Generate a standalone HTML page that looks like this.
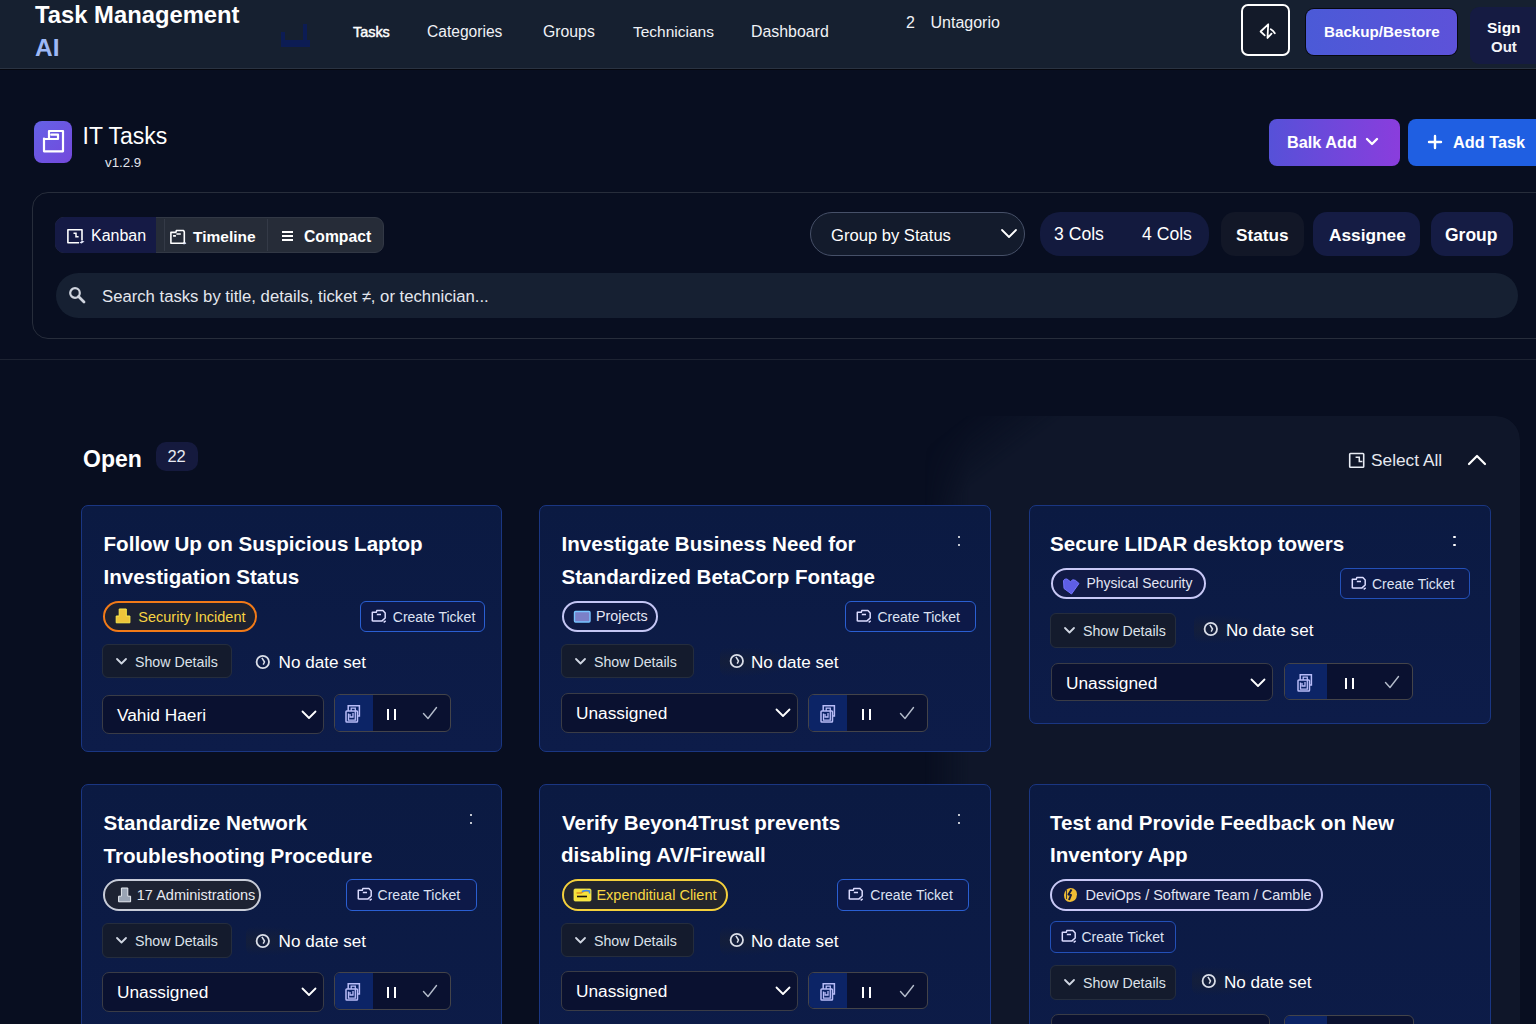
<!DOCTYPE html>
<html><head><meta charset="utf-8"><title>IT Tasks</title>
<style>
html,body{margin:0;padding:0;}
body{width:1536px;height:1024px;overflow:hidden;position:relative;background:#080e20;font-family:"Liberation Sans",sans-serif;}
.t{position:absolute;white-space:nowrap;}
.r{position:absolute;box-sizing:border-box;}
</style></head><body>

<div class="r" style="left:0px;top:0px;width:1536px;height:68px;background:#162030;"></div>
<div class="r" style="left:0px;top:68px;width:1536px;height:1px;background:#2a3342;"></div>
<div class="r" style="left:0px;top:69px;width:1536px;height:1px;background:#05070f;"></div>
<div class="t" style="left:35px;top:-0.12px;font-size:23.8px;line-height:29.75px;font-weight:700;color:#ffffff;">Task Management</div>
<div class="t" style="left:35px;top:33.2px;font-size:24.5px;line-height:30.62px;font-weight:700;color:#9db8f6;">AI</div>
<div class="r" style="left:281px;top:32px;width:4px;height:15px;background:#0c1c54;"></div>
<div class="r" style="left:303px;top:24px;width:4px;height:23px;background:#0c1c54;"></div>
<div class="r" style="left:281px;top:40px;width:29px;height:7px;background:#0c1c54;"></div>
<div class="t" style="left:353px;top:23.01px;font-size:14.4px;line-height:18.0px;font-weight:400;color:#ffffff;-webkit-text-stroke:0.45px #fff;">Tasks</div>
<div class="t" style="left:427px;top:21.84px;font-size:15.6px;line-height:19.5px;font-weight:400;color:#f0f2f6;">Categories</div>
<div class="t" style="left:543px;top:21.65px;font-size:15.8px;line-height:19.75px;font-weight:400;color:#f0f2f6;">Groups</div>
<div class="t" style="left:633px;top:21.94px;font-size:15.5px;line-height:19.38px;font-weight:400;color:#f0f2f6;">Technicians</div>
<div class="t" style="left:751px;top:21.55px;font-size:15.9px;line-height:19.88px;font-weight:400;color:#f0f2f6;">Dashboard</div>
<div class="t" style="left:906px;top:13.46px;font-size:16px;line-height:20.0px;font-weight:400;color:#f0f2f6;">2</div>
<div class="t" style="left:930.5px;top:13.46px;font-size:16px;line-height:20.0px;font-weight:400;color:#f0f2f6;">Untagorio</div>
<div class="r" style="left:1241px;top:4px;width:49px;height:52px;border:2px solid #ffffff;border-radius:7px;background:#131a29;"></div>
<svg class="r" style="left:1258px;top:22px;" width="20" height="20" viewBox="0 0 20 20" fill="none"><path d="M6.7 13.3 L2.6 9.5 L10.2 2.3 L9.5 16 L13.5 11.7 M12.8 7.2 Q15.2 8.5 16.8 11.2" stroke="#fff" stroke-width="1.8" stroke-linecap="round" stroke-linejoin="round"/></svg>
<div class="r" style="left:1305px;top:8px;width:153px;height:48px;border-radius:9px;background:#06080f;"></div>
<div class="r" style="left:1306px;top:9px;width:151px;height:46px;border-radius:8px;background:linear-gradient(90deg,#4b5ad7,#5d52d9);"></div>
<div class="t" style="left:1324px;top:22.23px;font-size:15.2px;line-height:19.0px;font-weight:700;color:#ffffff;">Backup/Bestore</div>
<div class="r" style="left:1470px;top:7px;width:76px;height:57px;border-radius:9px;background:#151b42;"></div>
<div class="t" style="left:1487px;top:17.94px;font-size:15.5px;line-height:19.38px;font-weight:700;color:#ffffff;">Sign</div>
<div class="t" style="left:1491px;top:38.43px;font-size:15px;line-height:18.75px;font-weight:700;color:#f4f4f8;">Out</div>
<div class="r" style="left:34px;top:121px;width:38px;height:42px;border-radius:8px;background:linear-gradient(135deg,#6462e6,#7448dc);"></div>
<svg class="r" style="left:32px;top:119px;" width="42" height="46" viewBox="0 0 42 46" fill="none"><path d="M12 19.5 V32.3 H31 V12 H17 V20 M12 20 H26 V15.7 H19.3" stroke="#fff" stroke-width="2.2" stroke-linejoin="round" stroke-linecap="round"/></svg>
<div class="t" style="left:82.5px;top:121.66px;font-size:23px;line-height:28.75px;font-weight:400;color:#ffffff;">IT Tasks</div>
<div class="t" style="left:105px;top:155.08px;font-size:13.3px;line-height:16.62px;font-weight:400;color:#e2e5ec;">v1.2.9</div>
<div class="r" style="left:1269px;top:119px;width:131px;height:47px;border-radius:8px;background:linear-gradient(90deg,#5651d8,#8a3ddd);"></div>
<div class="t" style="left:1287px;top:132.16px;font-size:16.3px;line-height:20.38px;font-weight:700;color:#ffffff;">Balk Add</div>
<svg class="r" style="left:1365px;top:137px;" width="14" height="10" viewBox="0 0 14 10" fill="none"><path d="M2 2 L7 7 L12 2" stroke="#fff" stroke-width="2.4" stroke-linecap="round" stroke-linejoin="round"/></svg>
<div class="r" style="left:1408px;top:119px;width:138px;height:47px;border-radius:8px;background:#1f5fe2;"></div>
<svg class="r" style="left:1427px;top:134px;" width="16" height="16" viewBox="0 0 16 16" fill="none"><path d="M8 2 V14 M2 8 H14" stroke="#fff" stroke-width="2.4" stroke-linecap="round"/></svg>
<div class="t" style="left:1453px;top:132.16px;font-size:16.3px;line-height:20.38px;font-weight:700;color:#ffffff;">Add Task</div>
<div class="r" style="left:32px;top:192px;width:1528px;height:147px;border:1px solid #272d3b;border-radius:16px;background:#080e20;"></div>
<div class="r" style="left:55px;top:217px;width:329px;height:36px;border-radius:9px;background:#262c38;border:1px solid #323845;"></div>
<div class="r" style="left:55px;top:217px;width:101px;height:36px;border-radius:9px 0 0 9px;background:#151a45;"></div>
<div class="r" style="left:164px;top:219px;width:1px;height:32px;background:#343a47;"></div>
<div class="r" style="left:267px;top:219px;width:1px;height:32px;background:#343a47;"></div>
<svg class="r" style="left:66px;top:228px;" width="20" height="18" viewBox="0 0 20 18" fill="none"><path d="M13 14.7 H1.9 V1.7 H16 V12.5" stroke="#fff" stroke-width="1.6" stroke-linejoin="round"/><path d="M7.5 5.3 H10 V8.75 H12.6" stroke="#fff" stroke-width="1.5"/><path d="M13.5 14.8 L16 12.8 L18.5 13.5 L15.5 15.5 Z" fill="#e8ecff"/></svg>
<div class="t" style="left:91px;top:226.46px;font-size:16px;line-height:20.0px;font-weight:400;color:#ffffff;">Kanban</div>
<svg class="r" style="left:169px;top:229px;" width="19" height="17" viewBox="0 0 19 17" fill="none"><path d="M1.9 14.3 V3.4 H6.9 L7.4 1.5 H14.5 L15.3 2.8 V13.2 L14.5 14.3 Z M4.1 6.9 H6.9 M7.4 5 H11.8" stroke="#fff" stroke-width="1.6" stroke-linejoin="round"/><path d="M14.5 15 L17 13.8" stroke="#dfe8ff" stroke-width="1.3"/></svg>
<div class="t" style="left:193px;top:226.94px;font-size:15.5px;line-height:19.38px;font-weight:700;color:#ffffff;">Timeline</div>
<svg class="r" style="left:281px;top:230px;" width="13" height="12" viewBox="0 0 13 12" fill="none"><path d="M1 2 H12 M1 6 H12 M1 10 H12" stroke="#fff" stroke-width="2"/></svg>
<div class="t" style="left:304px;top:226.75px;font-size:15.7px;line-height:19.62px;font-weight:700;color:#ffffff;">Compact</div>
<div class="r" style="left:810px;top:212px;width:215px;height:44px;border-radius:22px;background:#131b2c;border:1px solid #465068;"></div>
<div class="t" style="left:831px;top:226.27px;font-size:16.6px;line-height:20.75px;font-weight:400;color:#ffffff;">Group by Status</div>
<svg class="r" style="left:1000px;top:228px;" width="18" height="12" viewBox="0 0 18 12" fill="none"><path d="M2 2 L9 9 L16 2" stroke="#fff" stroke-width="1.8" stroke-linecap="round" stroke-linejoin="round"/></svg>
<div class="r" style="left:1040px;top:212px;width:169px;height:44px;border-radius:20px;background:#131a3e;"></div>
<div class="t" style="left:1054px;top:222.9px;font-size:17.6px;line-height:22.0px;font-weight:400;color:#ffffff;">3 Cols</div>
<div class="t" style="left:1142px;top:222.9px;font-size:17.6px;line-height:22.0px;font-weight:400;color:#ffffff;">4 Cols</div>
<div class="r" style="left:1221px;top:212px;width:83px;height:44px;border-radius:14px;background:#121727;"></div>
<div class="t" style="left:1236px;top:225.29px;font-size:17.2px;line-height:21.5px;font-weight:700;color:#ffffff;">Status</div>
<div class="r" style="left:1313px;top:212px;width:107px;height:44px;border-radius:14px;background:#151c44;"></div>
<div class="t" style="left:1329px;top:225.2px;font-size:17.3px;line-height:21.62px;font-weight:700;color:#ffffff;">Assignee</div>
<div class="r" style="left:1431px;top:212px;width:82px;height:44px;border-radius:14px;background:#151c44;"></div>
<div class="t" style="left:1445px;top:225.0px;font-size:17.5px;line-height:21.88px;font-weight:700;color:#ffffff;">Group</div>
<div class="r" style="left:56px;top:273px;width:1462px;height:45px;border-radius:23px;background:#162032;"></div>
<svg class="r" style="left:68px;top:286px;" width="19" height="19" viewBox="0 0 19 19" fill="none"><circle cx="7" cy="7" r="4.8" stroke="#cfd4de" stroke-width="2.2"/><path d="M10.5 10.5 L16 16" stroke="#cfd4de" stroke-width="2.8" stroke-linecap="round"/></svg>
<div class="t" style="left:102px;top:287.47px;font-size:16.7px;line-height:20.88px;font-weight:400;color:#e4e7ee;">Search tasks by title, details, ticket &#8800;, or technician...</div>
<div class="r" style="left:0px;top:359px;width:1536px;height:1px;background:#1d2332;"></div>
<div class="r" style="left:925px;top:416px;width:595px;height:684px;border-radius:24px;background:rgba(20,27,46,0.62);-webkit-mask-image:linear-gradient(90deg,transparent 0px,#000 45px),linear-gradient(143deg,transparent 25px,#000 85px);-webkit-mask-composite:source-in;mask-image:linear-gradient(90deg,transparent 0px,#000 45px),linear-gradient(143deg,transparent 25px,#000 85px);mask-composite:intersect;"></div>
<div class="t" style="left:83px;top:445.16px;font-size:23px;line-height:28.75px;font-weight:700;color:#ffffff;">Open</div>
<div class="r" style="left:156px;top:442px;width:42px;height:29px;border-radius:10px;background:#151a3e;"></div>
<div class="t" style="left:167.4px;top:445.97px;font-size:16.5px;line-height:20.62px;font-weight:400;color:#e8eaf2;">22</div>
<svg class="r" style="left:1348px;top:452px;" width="17" height="17" viewBox="0 0 17 17" fill="none"><rect x="1.7" y="1.5" width="14" height="13.8" rx="0.8" stroke="#e8ecf4" stroke-width="1.6"/><path d="M7.6 5.2 H11.3 V9.4 H14.4" stroke="#e8ecf4" stroke-width="1.5"/></svg>
<div class="t" style="left:1371px;top:450.2px;font-size:17.3px;line-height:21.62px;font-weight:400;color:#e6e9f0;">Select All</div>
<svg class="r" style="left:1467px;top:452px;" width="20" height="15" viewBox="0 0 20 15" fill="none"><path d="M2 12 L10 4 L18 12" stroke="#fff" stroke-width="2.2" stroke-linecap="round" stroke-linejoin="round"/></svg>
<div class="r" style="left:81px;top:505px;width:421px;height:247px;background:linear-gradient(180deg,#0b1a42 0%,#0d1c49 100%);border:1px solid #1a3682;border-radius:7px;"></div>
<div class="t" style="left:103.5px;top:530.69px;font-size:20.6px;line-height:25.75px;font-weight:700;color:#fff;">Follow Up on Suspicious Laptop</div>
<div class="t" style="left:103.5px;top:564.39px;font-size:20.6px;line-height:25.75px;font-weight:700;color:#fff;">Investigation Status</div>
<div class="r" style="left:103px;top:601px;width:154px;height:31px;border:2px solid #f27a18;border-radius:16px;background:#1d2130;"></div>
<svg class="r" style="left:103px;top:601px;" width="32" height="30" viewBox="0 0 32 30" fill="none"><path d="M16.2 8 H23.3 V15 H26.9 V21.8 H13.2 V15 H16.2 Z" fill="#eec43a" stroke="#fbe94a" stroke-width="1" stroke-linejoin="round"/></svg>
<div class="t" style="left:138.3px;top:607.92px;font-size:14.5px;line-height:18.12px;font-weight:400;color:#f8d443;">Security Incident</div>
<div class="r" style="left:360px;top:601px;width:125px;height:31px;border:1.5px solid #2a5fd2;border-radius:6px;background:#0d1948;"></div>
<svg class="r" style="left:366px;top:604px;" width="22" height="22" viewBox="0 0 22 22" fill="none"><path d="M6.3 17.3 V8.2 H10.3 L10.8 6.6 H16.9 L19.2 9.1 V14 L16 16.9 H6.3 M10.8 10.5 H15 M17.6 18.3 L19.7 16.9" stroke="#dcdcff" stroke-width="1.5" stroke-linejoin="round"/></svg>
<div class="t" style="left:392.8px;top:609.2px;font-size:14px;line-height:17.5px;font-weight:400;color:#dde2f2;">Create Ticket</div>
<div class="r" style="left:102px;top:644px;width:130px;height:34px;border:1px solid #252d3d;border-radius:6px;background:#141b2d;"></div>
<svg class="r" style="left:115px;top:657px;" width="13" height="9" viewBox="0 0 13 9" fill="none"><path d="M2 2 L6.5 6.5 L11 2" stroke="#d0d6e2" stroke-width="1.8" stroke-linecap="round" stroke-linejoin="round"/></svg>
<div class="t" style="left:135px;top:653.7px;font-size:14.2px;line-height:17.75px;font-weight:400;color:#dde2ea;">Show Details</div>
<svg class="r" style="left:254.6px;top:653.5px;" width="16" height="16" viewBox="0 0 16 16" fill="none"><circle cx="7.8" cy="8" r="6.2" stroke="#dadee8" stroke-width="1.8"/><path d="M6.9 3.8 L9.5 8 L8.2 10.6" stroke="#dadee8" stroke-width="1.5" stroke-linejoin="round"/></svg>
<div class="t" style="left:278.6px;top:652.08px;font-size:17.1px;line-height:21.38px;font-weight:400;color:#ffffff;">No date set</div>
<div class="r" style="left:102px;top:694.5px;width:221.5px;height:39.0px;border:1px solid #3a3c46;border-radius:7px;background:#0a1130;"></div>
<div class="t" style="left:117px;top:704.7px;font-size:17.3px;line-height:21.62px;font-weight:400;color:#ffffff;">Vahid Haeri</div>
<svg class="r" style="left:300.5px;top:709.5px;" width="16" height="10" viewBox="0 0 16 10" fill="none"><path d="M1.5 1.5 L8 8 L14.5 1.5" stroke="#fff" stroke-width="1.8" stroke-linecap="round" stroke-linejoin="round"/></svg>
<div class="r" style="left:333.5px;top:694px;width:117.0px;height:38px;border:1px solid #444449;border-radius:6px;background:#0a1130;"></div>
<div class="r" style="left:334.5px;top:695px;width:38.0px;height:36px;border-radius:5px 0 0 5px;background:#0c2466;"></div>
<svg class="r" style="left:340.0px;top:700px;" width="26" height="28" viewBox="0 0 26 28" fill="none"><path d="M8.2 11 V5.7 H19.4 V16.1 H17.5" stroke="#b8bcf8" stroke-width="1.5"/><rect x="6" y="11" width="11.5" height="11.1" rx="0.8" stroke="#b8bcf8" stroke-width="1.5"/><path d="M11.2 11 V8.2 H15.3 V20.2 H8.5 V13.5" stroke="#b8bcf8" stroke-width="1.3"/><path d="M10 14 V17 H13 V13" stroke="#b8bcf8" stroke-width="1.3"/></svg>
<div class="r" style="left:387px;top:709px;width:2px;height:11px;background:#ffffff;"></div>
<div class="r" style="left:394px;top:709px;width:2px;height:11px;background:#ffffff;"></div>
<svg class="r" style="left:421.5px;top:706px;" width="16" height="15" viewBox="0 0 16 15" fill="none"><path d="M1.5 7.5 L6 12.5 L14.5 1.5" stroke="#b4bccb" stroke-width="1.4" stroke-linecap="round" stroke-linejoin="round"/></svg>
<div class="r" style="left:539px;top:505px;width:451.5px;height:247px;background:linear-gradient(180deg,#0b1a42 0%,#0d1c49 100%);border:1px solid #1a3682;border-radius:7px;"></div>
<div class="t" style="left:561.5px;top:530.69px;font-size:20.6px;line-height:25.75px;font-weight:700;color:#fff;">Investigate Business Need for</div>
<div class="t" style="left:561.5px;top:564.39px;font-size:20.6px;line-height:25.75px;font-weight:700;color:#fff;">Standardized BetaCorp Fontage</div>
<div class="r" style="left:957.9px;top:536px;width:2.2000000000000455px;height:2.2000000000000455px;border-radius:50%;background:#fff;"></div>
<div class="r" style="left:957.9px;top:543.5px;width:2.2000000000000455px;height:2.2000000000000455px;border-radius:50%;background:#fff;"></div>
<div class="r" style="left:562px;top:601px;width:96px;height:31px;border:2px solid #c4c6f4;border-radius:16px;background:#0f1a44;"></div>
<svg class="r" style="left:562px;top:601px;" width="32" height="30" viewBox="0 0 32 30" fill="none"><rect x="12.5" y="10.5" width="15.5" height="10.5" rx="1" fill="#7b80c8" stroke="#78c4ff" stroke-width="1.4"/></svg>
<div class="t" style="left:596px;top:608.11px;font-size:14.3px;line-height:17.88px;font-weight:400;color:#e4e6f4;">Projects</div>
<div class="r" style="left:845px;top:601px;width:131px;height:31px;border:1.5px solid #2a5fd2;border-radius:6px;background:#0d1948;"></div>
<svg class="r" style="left:851px;top:604px;" width="22" height="22" viewBox="0 0 22 22" fill="none"><path d="M6.3 17.3 V8.2 H10.3 L10.8 6.6 H16.9 L19.2 9.1 V14 L16 16.9 H6.3 M10.8 10.5 H15 M17.6 18.3 L19.7 16.9" stroke="#dcdcff" stroke-width="1.5" stroke-linejoin="round"/></svg>
<div class="t" style="left:877.5px;top:609.2px;font-size:14px;line-height:17.5px;font-weight:400;color:#dde2f2;">Create Ticket</div>
<div class="r" style="left:561px;top:644px;width:133px;height:34px;border:1px solid #252d3d;border-radius:6px;background:#141b2d;"></div>
<svg class="r" style="left:574px;top:657px;" width="13" height="9" viewBox="0 0 13 9" fill="none"><path d="M2 2 L6.5 6.5 L11 2" stroke="#d0d6e2" stroke-width="1.8" stroke-linecap="round" stroke-linejoin="round"/></svg>
<div class="t" style="left:594px;top:653.7px;font-size:14.2px;line-height:17.75px;font-weight:400;color:#dde2ea;">Show Details</div>
<div class="r" style="left:720px;top:646.5px;width:79px;height:30.0px;border-radius:8px;background:radial-gradient(ellipse at 20% 50%,rgba(24,32,52,0.7),rgba(24,32,52,0) 70%);"></div>
<svg class="r" style="left:729px;top:653.3px;" width="16" height="16" viewBox="0 0 16 16" fill="none"><circle cx="7.8" cy="8" r="6.2" stroke="#dadee8" stroke-width="1.8"/><path d="M6.9 3.8 L9.5 8 L8.2 10.6" stroke="#dadee8" stroke-width="1.5" stroke-linejoin="round"/></svg>
<div class="t" style="left:751px;top:651.88px;font-size:17.1px;line-height:21.38px;font-weight:400;color:#ffffff;">No date set</div>
<div class="r" style="left:561px;top:693px;width:237px;height:39.5px;border:1px solid #3a3c46;border-radius:7px;background:#0a1130;"></div>
<div class="t" style="left:576px;top:703.2px;font-size:17.3px;line-height:21.62px;font-weight:400;color:#ffffff;">Unassigned</div>
<svg class="r" style="left:775px;top:708px;" width="16" height="10" viewBox="0 0 16 10" fill="none"><path d="M1.5 1.5 L8 8 L14.5 1.5" stroke="#fff" stroke-width="1.8" stroke-linecap="round" stroke-linejoin="round"/></svg>
<div class="r" style="left:808px;top:694px;width:120px;height:37.60000000000002px;border:1px solid #444449;border-radius:6px;background:#0a1130;"></div>
<div class="r" style="left:809px;top:695px;width:38px;height:35.60000000000002px;border-radius:5px 0 0 5px;background:#0c2466;"></div>
<svg class="r" style="left:814.5px;top:700px;" width="26" height="28" viewBox="0 0 26 28" fill="none"><path d="M8.2 11 V5.7 H19.4 V16.1 H17.5" stroke="#b8bcf8" stroke-width="1.5"/><rect x="6" y="11" width="11.5" height="11.1" rx="0.8" stroke="#b8bcf8" stroke-width="1.5"/><path d="M11.2 11 V8.2 H15.3 V20.2 H8.5 V13.5" stroke="#b8bcf8" stroke-width="1.3"/><path d="M10 14 V17 H13 V13" stroke="#b8bcf8" stroke-width="1.3"/></svg>
<div class="r" style="left:862px;top:709px;width:2px;height:11px;background:#ffffff;"></div>
<div class="r" style="left:869px;top:709px;width:2px;height:11px;background:#ffffff;"></div>
<svg class="r" style="left:899px;top:706px;" width="16" height="15" viewBox="0 0 16 15" fill="none"><path d="M1.5 7.5 L6 12.5 L14.5 1.5" stroke="#b4bccb" stroke-width="1.4" stroke-linecap="round" stroke-linejoin="round"/></svg>
<div class="r" style="left:1029px;top:505px;width:462px;height:219px;background:linear-gradient(180deg,#0b1a42 0%,#0d1c49 100%);border:1px solid #1a3682;border-radius:7px;"></div>
<div class="t" style="left:1050px;top:531.29px;font-size:20.6px;line-height:25.75px;font-weight:700;color:#fff;">Secure LIDAR desktop towers</div>
<div class="r" style="left:1453.4px;top:536px;width:2.199999999999818px;height:2.2000000000000455px;border-radius:50%;background:#fff;"></div>
<div class="r" style="left:1453.4px;top:543.5px;width:2.199999999999818px;height:2.2000000000000455px;border-radius:50%;background:#fff;"></div>
<div class="r" style="left:1051px;top:568px;width:155px;height:31px;border:2px solid #c8c8f6;border-radius:16px;background:#111a46;"></div>
<svg class="r" style="left:1051px;top:568px;" width="32" height="30" viewBox="0 0 32 30" fill="none"><path d="M12.5 12.5 Q13.5 10.5 16 11 L19.5 13.8 L21.5 11.8 Q24 11 28 15.5 L20.5 26 L13 20.5 Z" fill="#5e5ee6" stroke="#7474ff" stroke-width="1" stroke-linejoin="round"/></svg>
<div class="t" style="left:1086.6px;top:575.49px;font-size:13.9px;line-height:17.38px;font-weight:400;color:#e4e6f4;">Physical Security</div>
<div class="r" style="left:1340px;top:568px;width:130px;height:31px;border:1.5px solid #2350b8;border-radius:6px;background:#0d1948;"></div>
<svg class="r" style="left:1346px;top:571px;" width="22" height="22" viewBox="0 0 22 22" fill="none"><path d="M6.3 17.3 V8.2 H10.3 L10.8 6.6 H16.9 L19.2 9.1 V14 L16 16.9 H6.3 M10.8 10.5 H15 M17.6 18.3 L19.7 16.9" stroke="#dcdcff" stroke-width="1.5" stroke-linejoin="round"/></svg>
<div class="t" style="left:1372px;top:576.2px;font-size:14px;line-height:17.5px;font-weight:400;color:#dde2f2;">Create Ticket</div>
<div class="r" style="left:1050px;top:613px;width:126px;height:35px;border:1px solid #252d3d;border-radius:6px;background:#141b2d;"></div>
<svg class="r" style="left:1063px;top:626px;" width="13" height="9" viewBox="0 0 13 9" fill="none"><path d="M2 2 L6.5 6.5 L11 2" stroke="#d0d6e2" stroke-width="1.8" stroke-linecap="round" stroke-linejoin="round"/></svg>
<div class="t" style="left:1083px;top:622.7px;font-size:14.2px;line-height:17.75px;font-weight:400;color:#dde2ea;">Show Details</div>
<div class="r" style="left:1194px;top:614.3px;width:79px;height:30.0px;border-radius:8px;background:radial-gradient(ellipse at 20% 50%,rgba(24,32,52,0.7),rgba(24,32,52,0) 70%);"></div>
<svg class="r" style="left:1203px;top:621.0999999999999px;" width="16" height="16" viewBox="0 0 16 16" fill="none"><circle cx="7.8" cy="8" r="6.2" stroke="#dadee8" stroke-width="1.8"/><path d="M6.9 3.8 L9.5 8 L8.2 10.6" stroke="#dadee8" stroke-width="1.5" stroke-linejoin="round"/></svg>
<div class="t" style="left:1226px;top:619.68px;font-size:17.1px;line-height:21.38px;font-weight:400;color:#ffffff;">No date set</div>
<div class="r" style="left:1051px;top:663px;width:221.5px;height:38px;border:1px solid #3a3c46;border-radius:7px;background:#0a1130;"></div>
<div class="t" style="left:1066px;top:673.2px;font-size:17.3px;line-height:21.62px;font-weight:400;color:#ffffff;">Unassigned</div>
<svg class="r" style="left:1249.5px;top:678px;" width="16" height="10" viewBox="0 0 16 10" fill="none"><path d="M1.5 1.5 L8 8 L14.5 1.5" stroke="#fff" stroke-width="1.8" stroke-linecap="round" stroke-linejoin="round"/></svg>
<div class="r" style="left:1283.5px;top:663px;width:129.5px;height:37px;border:1px solid #444449;border-radius:6px;background:#0a1130;"></div>
<div class="r" style="left:1284.5px;top:664px;width:42.0px;height:35px;border-radius:5px 0 0 5px;background:#0c2466;"></div>
<svg class="r" style="left:1292.0px;top:669px;" width="26" height="28" viewBox="0 0 26 28" fill="none"><path d="M8.2 11 V5.7 H19.4 V16.1 H17.5" stroke="#b8bcf8" stroke-width="1.5"/><rect x="6" y="11" width="11.5" height="11.1" rx="0.8" stroke="#b8bcf8" stroke-width="1.5"/><path d="M11.2 11 V8.2 H15.3 V20.2 H8.5 V13.5" stroke="#b8bcf8" stroke-width="1.3"/><path d="M10 14 V17 H13 V13" stroke="#b8bcf8" stroke-width="1.3"/></svg>
<div class="r" style="left:1345px;top:678px;width:2px;height:11px;background:#ffffff;"></div>
<div class="r" style="left:1352px;top:678px;width:2px;height:11px;background:#ffffff;"></div>
<svg class="r" style="left:1384px;top:675px;" width="16" height="15" viewBox="0 0 16 15" fill="none"><path d="M1.5 7.5 L6 12.5 L14.5 1.5" stroke="#b4bccb" stroke-width="1.4" stroke-linecap="round" stroke-linejoin="round"/></svg>
<div class="r" style="left:81px;top:784px;width:421px;height:316px;background:linear-gradient(180deg,#0b1a42 0%,#0d1c49 100%);border:1px solid #1a3682;border-radius:7px;"></div>
<div class="t" style="left:103.5px;top:809.99px;font-size:20.6px;line-height:25.75px;font-weight:700;color:#fff;">Standardize Network</div>
<div class="t" style="left:103.5px;top:843.19px;font-size:20.6px;line-height:25.75px;font-weight:700;color:#fff;">Troubleshooting Procedure</div>
<div class="r" style="left:469.7px;top:814px;width:2.2000000000000455px;height:2.2000000000000455px;border-radius:50%;background:#fff;"></div>
<div class="r" style="left:469.7px;top:821.5px;width:2.2000000000000455px;height:2.2000000000000455px;border-radius:50%;background:#fff;"></div>
<div class="r" style="left:103px;top:879px;width:158px;height:32px;border:2px solid #c8ccd8;border-radius:16px;background:#1d2232;"></div>
<svg class="r" style="left:103px;top:879px;" width="32" height="30" viewBox="0 0 32 30" fill="none"><path d="M18.4 9 H24.8 V17.2 H27.6 V22.8 H15.6 V17.2 H18.4 Z" fill="#9aa4b4" stroke="#e8ecf2" stroke-width="1" stroke-linejoin="round"/></svg>
<div class="t" style="left:136.8px;top:885.92px;font-size:14.5px;line-height:18.12px;font-weight:400;color:#e8eaf0;">17 Administrations</div>
<div class="r" style="left:346px;top:879px;width:131px;height:32px;border:1.5px solid #2a5fd2;border-radius:6px;background:#0d1948;"></div>
<svg class="r" style="left:352px;top:882px;" width="22" height="22" viewBox="0 0 22 22" fill="none"><path d="M6.3 17.3 V8.2 H10.3 L10.8 6.6 H16.9 L19.2 9.1 V14 L16 16.9 H6.3 M10.8 10.5 H15 M17.6 18.3 L19.7 16.9" stroke="#dcdcff" stroke-width="1.5" stroke-linejoin="round"/></svg>
<div class="t" style="left:377.6px;top:887.2px;font-size:14px;line-height:17.5px;font-weight:400;color:#dde2f2;">Create Ticket</div>
<div class="r" style="left:102px;top:923px;width:130px;height:34.5px;border:1px solid #252d3d;border-radius:6px;background:#141b2d;"></div>
<svg class="r" style="left:115px;top:936px;" width="13" height="9" viewBox="0 0 13 9" fill="none"><path d="M2 2 L6.5 6.5 L11 2" stroke="#d0d6e2" stroke-width="1.8" stroke-linecap="round" stroke-linejoin="round"/></svg>
<div class="t" style="left:135px;top:932.7px;font-size:14.2px;line-height:17.75px;font-weight:400;color:#dde2ea;">Show Details</div>
<div class="r" style="left:245.6px;top:925.8px;width:79.00000000000003px;height:30.0px;border-radius:8px;background:radial-gradient(ellipse at 20% 50%,rgba(24,32,52,0.7),rgba(24,32,52,0) 70%);"></div>
<svg class="r" style="left:254.6px;top:932.5999999999999px;" width="16" height="16" viewBox="0 0 16 16" fill="none"><circle cx="7.8" cy="8" r="6.2" stroke="#dadee8" stroke-width="1.8"/><path d="M6.9 3.8 L9.5 8 L8.2 10.6" stroke="#dadee8" stroke-width="1.5" stroke-linejoin="round"/></svg>
<div class="t" style="left:278.6px;top:931.18px;font-size:17.1px;line-height:21.38px;font-weight:400;color:#ffffff;">No date set</div>
<div class="r" style="left:102px;top:971.5px;width:221.5px;height:40.0px;border:1px solid #3a3c46;border-radius:7px;background:#0a1130;"></div>
<div class="t" style="left:117px;top:981.7px;font-size:17.3px;line-height:21.62px;font-weight:400;color:#ffffff;">Unassigned</div>
<svg class="r" style="left:300.5px;top:986.5px;" width="16" height="10" viewBox="0 0 16 10" fill="none"><path d="M1.5 1.5 L8 8 L14.5 1.5" stroke="#fff" stroke-width="1.8" stroke-linecap="round" stroke-linejoin="round"/></svg>
<div class="r" style="left:333.5px;top:972px;width:117.0px;height:37.700000000000045px;border:1px solid #444449;border-radius:6px;background:#0a1130;"></div>
<div class="r" style="left:334.5px;top:973px;width:38.0px;height:35.700000000000045px;border-radius:5px 0 0 5px;background:#0c2466;"></div>
<svg class="r" style="left:340.0px;top:978px;" width="26" height="28" viewBox="0 0 26 28" fill="none"><path d="M8.2 11 V5.7 H19.4 V16.1 H17.5" stroke="#b8bcf8" stroke-width="1.5"/><rect x="6" y="11" width="11.5" height="11.1" rx="0.8" stroke="#b8bcf8" stroke-width="1.5"/><path d="M11.2 11 V8.2 H15.3 V20.2 H8.5 V13.5" stroke="#b8bcf8" stroke-width="1.3"/><path d="M10 14 V17 H13 V13" stroke="#b8bcf8" stroke-width="1.3"/></svg>
<div class="r" style="left:387px;top:987px;width:2px;height:11px;background:#ffffff;"></div>
<div class="r" style="left:394px;top:987px;width:2px;height:11px;background:#ffffff;"></div>
<svg class="r" style="left:421.5px;top:984px;" width="16" height="15" viewBox="0 0 16 15" fill="none"><path d="M1.5 7.5 L6 12.5 L14.5 1.5" stroke="#b4bccb" stroke-width="1.4" stroke-linecap="round" stroke-linejoin="round"/></svg>
<div class="r" style="left:539px;top:784px;width:451.5px;height:316px;background:linear-gradient(180deg,#0b1a42 0%,#0d1c49 100%);border:1px solid #1a3682;border-radius:7px;"></div>
<div class="t" style="left:562px;top:809.69px;font-size:20.6px;line-height:25.75px;font-weight:700;color:#fff;">Verify Beyon4Trust prevents</div>
<div class="t" style="left:561px;top:841.79px;font-size:20.6px;line-height:25.75px;font-weight:700;color:#fff;">disabling AV/Firewall</div>
<div class="r" style="left:957.9px;top:814px;width:2.2000000000000455px;height:2.2000000000000455px;border-radius:50%;background:#fff;"></div>
<div class="r" style="left:957.9px;top:821.5px;width:2.2000000000000455px;height:2.2000000000000455px;border-radius:50%;background:#fff;"></div>
<div class="r" style="left:562px;top:879px;width:165.5px;height:32px;border:2px solid #f4d03c;border-radius:16px;background:#23252c;"></div>
<svg class="r" style="left:562px;top:879px;" width="32" height="30" viewBox="0 0 32 30" fill="none"><rect x="12" y="10" width="17" height="12" rx="1.2" fill="#f7e23a" stroke="#fbee50" stroke-width="0.8"/><path d="M14.5 14 H19 L22 12 H27" stroke="#e09020" stroke-width="1.6"/><path d="M20 12.5 Q24 11 27.5 12 V14.5" stroke="#3a8cf0" stroke-width="1.5"/><path d="M15 17.5 H25" stroke="#1a1410" stroke-width="1.6"/></svg>
<div class="t" style="left:596.4px;top:885.92px;font-size:14.5px;line-height:18.12px;font-weight:400;color:#f8d843;">Expenditiual Client</div>
<div class="r" style="left:837px;top:879px;width:132px;height:32px;border:1.5px solid #2a5fd2;border-radius:6px;background:#0d1948;"></div>
<svg class="r" style="left:843px;top:882px;" width="22" height="22" viewBox="0 0 22 22" fill="none"><path d="M6.3 17.3 V8.2 H10.3 L10.8 6.6 H16.9 L19.2 9.1 V14 L16 16.9 H6.3 M10.8 10.5 H15 M17.6 18.3 L19.7 16.9" stroke="#dcdcff" stroke-width="1.5" stroke-linejoin="round"/></svg>
<div class="t" style="left:870.3px;top:887.2px;font-size:14px;line-height:17.5px;font-weight:400;color:#dde2f2;">Create Ticket</div>
<div class="r" style="left:561px;top:923px;width:133px;height:34.299999999999955px;border:1px solid #252d3d;border-radius:6px;background:#141b2d;"></div>
<svg class="r" style="left:574px;top:936px;" width="13" height="9" viewBox="0 0 13 9" fill="none"><path d="M2 2 L6.5 6.5 L11 2" stroke="#d0d6e2" stroke-width="1.8" stroke-linecap="round" stroke-linejoin="round"/></svg>
<div class="t" style="left:594px;top:932.7px;font-size:14.2px;line-height:17.75px;font-weight:400;color:#dde2ea;">Show Details</div>
<div class="r" style="left:720px;top:925.5px;width:79px;height:30.0px;border-radius:8px;background:radial-gradient(ellipse at 20% 50%,rgba(24,32,52,0.7),rgba(24,32,52,0) 70%);"></div>
<svg class="r" style="left:729px;top:932.3px;" width="16" height="16" viewBox="0 0 16 16" fill="none"><circle cx="7.8" cy="8" r="6.2" stroke="#dadee8" stroke-width="1.8"/><path d="M6.9 3.8 L9.5 8 L8.2 10.6" stroke="#dadee8" stroke-width="1.5" stroke-linejoin="round"/></svg>
<div class="t" style="left:751px;top:930.88px;font-size:17.1px;line-height:21.38px;font-weight:400;color:#ffffff;">No date set</div>
<div class="r" style="left:561px;top:971px;width:237px;height:40px;border:1px solid #3a3c46;border-radius:7px;background:#0a1130;"></div>
<div class="t" style="left:576px;top:981.2px;font-size:17.3px;line-height:21.62px;font-weight:400;color:#ffffff;">Unassigned</div>
<svg class="r" style="left:775px;top:986px;" width="16" height="10" viewBox="0 0 16 10" fill="none"><path d="M1.5 1.5 L8 8 L14.5 1.5" stroke="#fff" stroke-width="1.8" stroke-linecap="round" stroke-linejoin="round"/></svg>
<div class="r" style="left:808px;top:972px;width:120px;height:37.299999999999955px;border:1px solid #444449;border-radius:6px;background:#0a1130;"></div>
<div class="r" style="left:809px;top:973px;width:38px;height:35.299999999999955px;border-radius:5px 0 0 5px;background:#0c2466;"></div>
<svg class="r" style="left:814.5px;top:978px;" width="26" height="28" viewBox="0 0 26 28" fill="none"><path d="M8.2 11 V5.7 H19.4 V16.1 H17.5" stroke="#b8bcf8" stroke-width="1.5"/><rect x="6" y="11" width="11.5" height="11.1" rx="0.8" stroke="#b8bcf8" stroke-width="1.5"/><path d="M11.2 11 V8.2 H15.3 V20.2 H8.5 V13.5" stroke="#b8bcf8" stroke-width="1.3"/><path d="M10 14 V17 H13 V13" stroke="#b8bcf8" stroke-width="1.3"/></svg>
<div class="r" style="left:862px;top:987px;width:2px;height:11px;background:#ffffff;"></div>
<div class="r" style="left:869px;top:987px;width:2px;height:11px;background:#ffffff;"></div>
<svg class="r" style="left:899px;top:984px;" width="16" height="15" viewBox="0 0 16 15" fill="none"><path d="M1.5 7.5 L6 12.5 L14.5 1.5" stroke="#b4bccb" stroke-width="1.4" stroke-linecap="round" stroke-linejoin="round"/></svg>
<div class="r" style="left:1029px;top:784px;width:462px;height:316px;background:linear-gradient(180deg,#0b1a42 0%,#0d1c49 100%);border:1px solid #1a3682;border-radius:7px;"></div>
<div class="t" style="left:1050px;top:810.49px;font-size:20.6px;line-height:25.75px;font-weight:700;color:#fff;">Test and Provide Feedback on New</div>
<div class="t" style="left:1050px;top:842.39px;font-size:20.6px;line-height:25.75px;font-weight:700;color:#fff;">Inventory App</div>
<div class="r" style="left:1050px;top:879px;width:273px;height:31.5px;border:2px solid #c8c8f6;border-radius:16px;background:#111a46;"></div>
<svg class="r" style="left:1050px;top:879px;" width="32" height="30" viewBox="0 0 32 30" fill="none"><path d="M20.5 9 Q27 9.5 27 15.5 Q26.5 22.5 20 23 Q14 22.5 14 16 Q14.5 10 20.5 9 Z" fill="#f0bc34"/><path d="M21.5 10.5 L18.5 15.5 L21 16 L19 21" stroke="#141a40" stroke-width="2" stroke-linejoin="round"/><path d="M16.5 11 L16.5 20" stroke="#141a40" stroke-width="0.8"/></svg>
<div class="t" style="left:1085.5px;top:885.92px;font-size:14.5px;line-height:18.12px;font-weight:400;color:#e4e6f4;">DeviOps / Software Team / Camble</div>
<div class="r" style="left:1050px;top:920.5px;width:126px;height:32.5px;border:1.5px solid #2350b8;border-radius:6px;background:#0d1948;"></div>
<svg class="r" style="left:1056px;top:923.5px;" width="22" height="22" viewBox="0 0 22 22" fill="none"><path d="M6.3 17.3 V8.2 H10.3 L10.8 6.6 H16.9 L19.2 9.1 V14 L16 16.9 H6.3 M10.8 10.5 H15 M17.6 18.3 L19.7 16.9" stroke="#dcdcff" stroke-width="1.5" stroke-linejoin="round"/></svg>
<div class="t" style="left:1081.5px;top:928.7px;font-size:14px;line-height:17.5px;font-weight:400;color:#dde2f2;">Create Ticket</div>
<div class="r" style="left:1050px;top:965px;width:126px;height:35px;border:1px solid #252d3d;border-radius:6px;background:#141b2d;"></div>
<svg class="r" style="left:1063px;top:978px;" width="13" height="9" viewBox="0 0 13 9" fill="none"><path d="M2 2 L6.5 6.5 L11 2" stroke="#d0d6e2" stroke-width="1.8" stroke-linecap="round" stroke-linejoin="round"/></svg>
<div class="t" style="left:1083px;top:974.7px;font-size:14.2px;line-height:17.75px;font-weight:400;color:#dde2ea;">Show Details</div>
<div class="r" style="left:1192px;top:966.3px;width:79px;height:30.0px;border-radius:8px;background:radial-gradient(ellipse at 20% 50%,rgba(24,32,52,0.7),rgba(24,32,52,0) 70%);"></div>
<svg class="r" style="left:1201px;top:973.0999999999999px;" width="16" height="16" viewBox="0 0 16 16" fill="none"><circle cx="7.8" cy="8" r="6.2" stroke="#dadee8" stroke-width="1.8"/><path d="M6.9 3.8 L9.5 8 L8.2 10.6" stroke="#dadee8" stroke-width="1.5" stroke-linejoin="round"/></svg>
<div class="t" style="left:1224px;top:971.68px;font-size:17.1px;line-height:21.38px;font-weight:400;color:#ffffff;">No date set</div>
<div class="r" style="left:1051px;top:1013.5px;width:219px;height:46.5px;border:1px solid #3a3c46;border-radius:7px;background:#0a1130;"></div>
<div class="t" style="left:1066px;top:1023.7px;font-size:17.3px;line-height:21.62px;font-weight:400;color:#ffffff;">Unassigned</div>
<svg class="r" style="left:1247px;top:1028.5px;" width="16" height="10" viewBox="0 0 16 10" fill="none"><path d="M1.5 1.5 L8 8 L14.5 1.5" stroke="#fff" stroke-width="1.8" stroke-linecap="round" stroke-linejoin="round"/></svg>
<div class="r" style="left:1284px;top:1015px;width:130px;height:45px;border:1px solid #444449;border-radius:6px;background:#0a1130;"></div>
<div class="r" style="left:1285px;top:1016px;width:42px;height:43px;border-radius:5px 0 0 5px;background:#0c2466;"></div>
<svg class="r" style="left:1292.5px;top:1021px;" width="26" height="28" viewBox="0 0 26 28" fill="none"><path d="M8.2 11 V5.7 H19.4 V16.1 H17.5" stroke="#b8bcf8" stroke-width="1.5"/><rect x="6" y="11" width="11.5" height="11.1" rx="0.8" stroke="#b8bcf8" stroke-width="1.5"/><path d="M11.2 11 V8.2 H15.3 V20.2 H8.5 V13.5" stroke="#b8bcf8" stroke-width="1.3"/><path d="M10 14 V17 H13 V13" stroke="#b8bcf8" stroke-width="1.3"/></svg>
<div class="r" style="left:1345px;top:1030px;width:2px;height:11px;background:#ffffff;"></div>
<div class="r" style="left:1352px;top:1030px;width:2px;height:11px;background:#ffffff;"></div>
<svg class="r" style="left:1385px;top:1027px;" width="16" height="15" viewBox="0 0 16 15" fill="none"><path d="M1.5 7.5 L6 12.5 L14.5 1.5" stroke="#b4bccb" stroke-width="1.4" stroke-linecap="round" stroke-linejoin="round"/></svg>
</body></html>
